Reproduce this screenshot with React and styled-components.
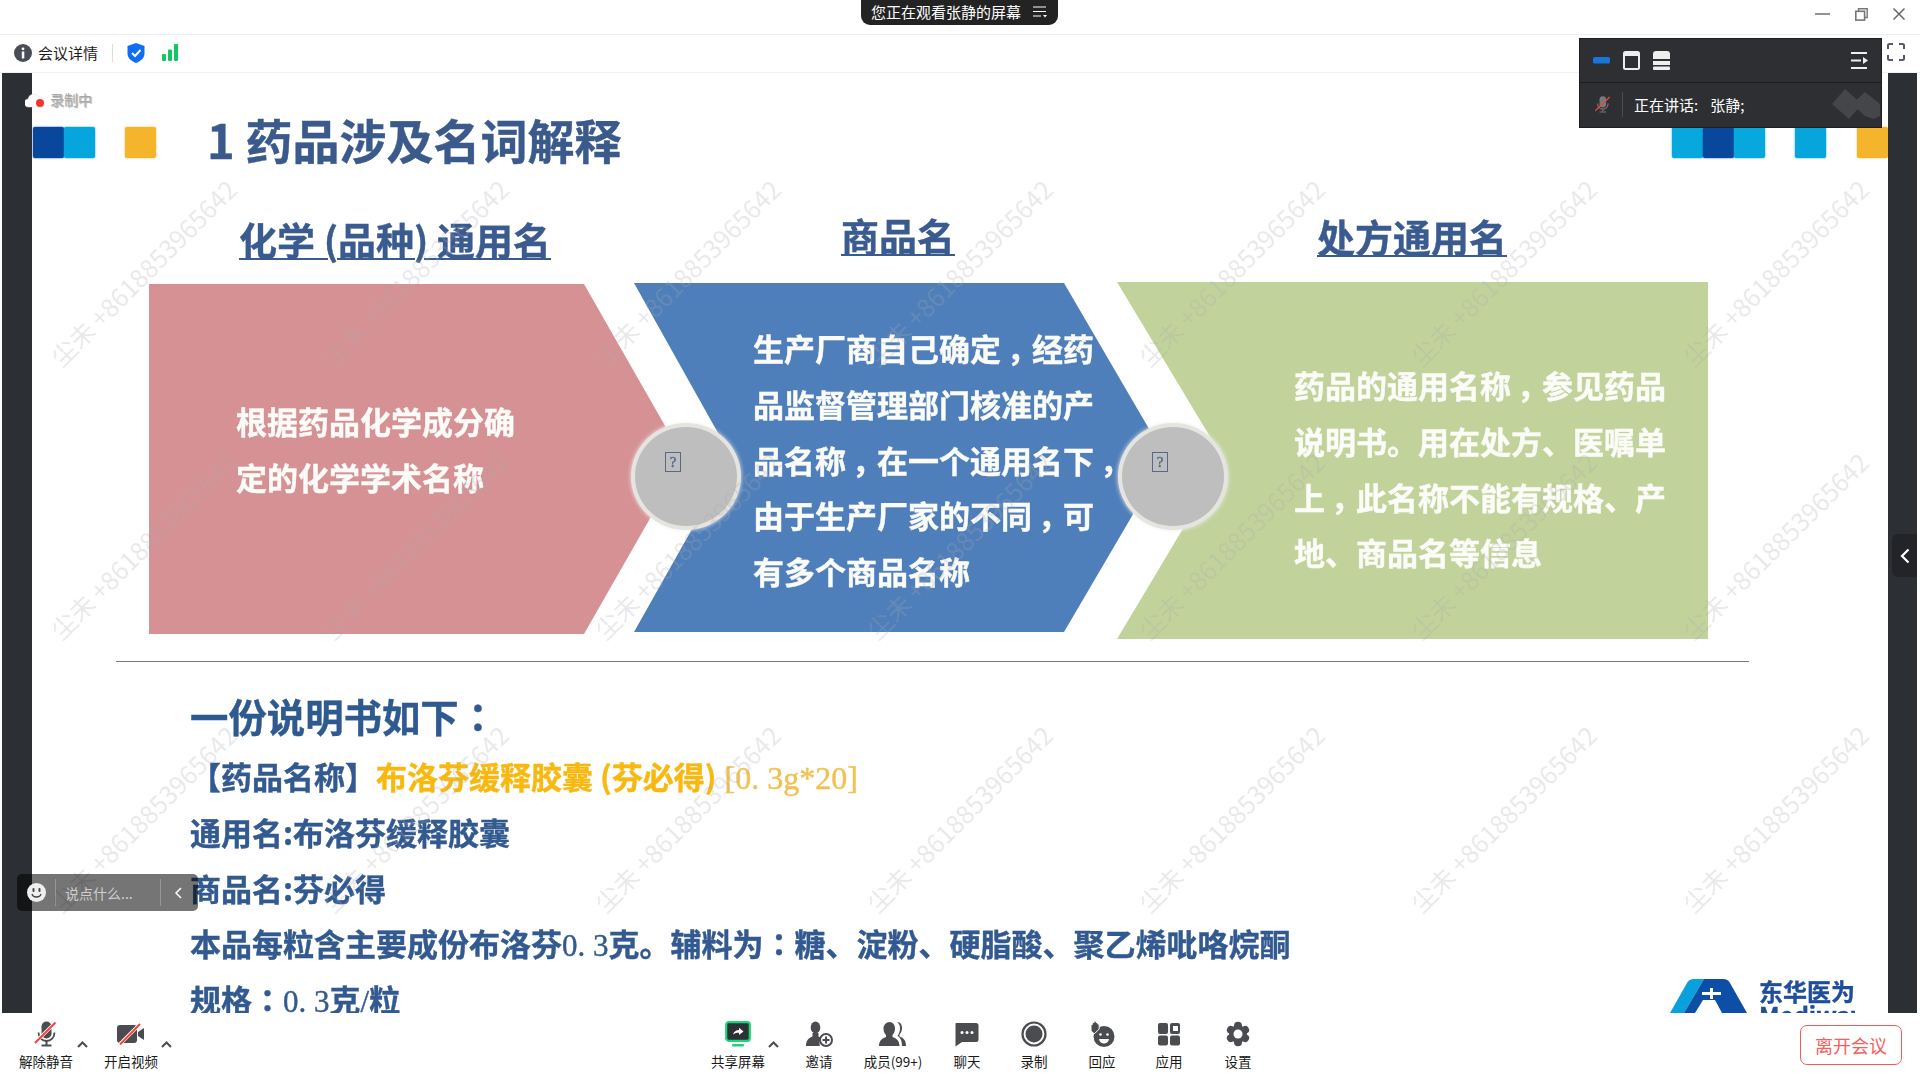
import React from "react";
import styled, { createGlobalStyle } from "styled-components";

const Global = createGlobalStyle`
  html, body { margin: 0; padding: 0; background: #fff; }
  * { box-sizing: border-box; }
`;

const UI = `"Noto Sans CJK SC", "Noto Sans", sans-serif`;
const SLIDE = `"Noto Sans CJK SC", "Noto Sans", sans-serif`;
const SERIF = `"Liberation Serif", "Noto Sans CJK SC", serif`;

const Page = styled.div`
  position: relative; width: 1920px; height: 1080px; overflow: hidden;
  display: flex; flex-direction: column; background: #fff; font-family: ${UI}; color: #1b1b1b;
`;
const TitleBar = styled.div`
  height: 35px; flex: none; border-bottom: 1px solid #eeeef8; display: flex; justify-content: flex-end;
  align-items: flex-start; padding: 8px 15px 0 0; gap: 25px;
`;
const Banner = styled.div`
  position: absolute; top: 0; left: 861px; width: 197px; height: 25px; background: #232323; border-radius: 0 0 9px 9px;
  display: flex; align-items: center; padding: 0 0 2px 10px; gap: 11px; color: #fff; font-size: 15px; line-height: 22px; white-space: nowrap;
`;
const InfoBar = styled.div`
  height: 38px; flex: none; border-bottom: 1px solid #f0f0fa; display: flex; align-items: center; padding: 0 0 2px 14px; position: relative;
`;
const InfoText = styled.span`
  font-size: 15px; margin-left: 6px; color: #1c1c1c; white-space: nowrap;
`;
const InfoSep = styled.i`
  width: 1px; height: 18px; background: #dcdcdc; margin: 0 14px;
`;
const FullBtn = styled.div`
  margin-left: auto; margin-right: 15px; display: flex; margin-top: -1px;
`;
const Stage = styled.div`
  position: relative; flex: none; height: 940px; display: flex; padding: 0 3px 0 2px; overflow: hidden;
`;
const SideBar = styled.div`
  flex: none; width: ${p => p.$w}px; background: #2c2f33;
`;
const Slide = styled.div`
  flex: none; width: 1856px; height: 940px; overflow: hidden; background: #fff; display: flex; flex-direction: column;
  font-family: ${SLIDE}; filter: blur(0.45px); -webkit-text-stroke: 0.4px currentColor;
`;
const SlideHead = styled.div`
  flex: none; height: 46px; margin-top: 46px; display: flex; align-items: center; padding-left: 1px;
`;
const SwatchSet = styled.div`
  display: flex; margin-left: ${p => p.$ml || 0}px; flex: none;
`;
const Swatch = styled.i`
  display: block; width: 31px; height: 31px; border-radius: 2px; background: ${p => p.$c};
  box-shadow: 0 0 2px ${p => p.$c};
`;
const Title = styled.h1`
  margin: -6px 0 0 51px; font-size: 47px; line-height: 46px; font-weight: 700; color: #3b5a8c; white-space: nowrap; width: 421px;
`;
const HeadRow = styled.div`
  flex: none; height: 117px; margin: 0 0 0 117px; display: grid; grid-template-columns: 492px 514px 514px; 
`;
const ColHead = styled.div`
  text-align: center; padding-top: ${p => p.$top}px; font-size: 38px; line-height: 42px; font-weight: 700; color: #3a5b8f;
  white-space: nowrap; text-decoration: underline; text-decoration-thickness: 2px; text-underline-offset: 3px;
`;
const ShapeRow = styled.div`
  position: relative; flex: none; height: 357px; margin-left: 117px; display: flex; align-items: flex-start;
`;
const Chevron = styled.div`
  flex: none; width: ${p => p.$w}px; height: ${p => p.$h}px; margin-top: ${p => p.$top}px; margin-left: ${p => p.$ml || 0}px;
  background: ${p => p.$bg}; clip-path: polygon(${p => p.$clip});
  display: flex; align-items: center; padding: ${p => p.$pt || 0}px 0 ${p => p.$pb || 0}px ${p => p.$pad}px;
  color: #fbfbf7; font-size: 31px; line-height: 55.8px; font-weight: 700; white-space: nowrap;
`;
const Orb = styled.div`
  position: absolute; top: 141px; left: ${p => p.$left}px; width: 110px; height: 107px; border-radius: 50%;
  background: #bebebe; border: 4px solid #e6e4df; box-shadow: 0 0 4px #eee; padding: 25px 0 0 30px;
`;
const Missing = styled.span`
  display: flex; align-items: center; justify-content: center; width: 16px; height: 20px;
  border: 1.5px solid #56688c; color: #56688c; font: 15px/1 ${SERIF};
`;
const Rule = styled.div`
  flex: none; height: 1px; margin: 22px 0 0 84px; width: 1633px; background: #7b7b7b;
`;
const Lower = styled.div`
  flex: 1; min-height: 0; margin-top: 25px; padding: 0 33px 0 158px; display: flex; justify-content: space-between; align-items: flex-end; overflow: hidden;
`;
const Lines = styled.div`
  align-self: flex-start; display: flex; flex-direction: column; height: 400px;
`;
const Big = styled.div`
  flex: none; font-size: 38.4px; line-height: 56px; font-weight: 700; color: #2f5a8f; margin-bottom: 5px; white-space: nowrap;
`;
const Line = styled.div`
  flex: none; height: 55.8px; font-size: 31px; line-height: 55.8px; font-weight: 700; color: #325a90; white-space: nowrap;
`;
const Accent = styled.span`
  color: ${p => p.$c || "#f8b80f"};
`;
const Num = styled.span`
  font-family: ${SERIF}; font-weight: 400; line-height: 1; font-size: ${p => p.$s || 31}px; color: ${p => p.$c || "inherit"};
`;
const Punct = styled.span`
  font-family: "Noto Sans CJK TC", sans-serif;
`;
const Comma = styled.span`
  display: inline-block; padding-left: 6px; margin-right: -6px;
`;
const Logo = styled.div`
  height: 34px; display: flex; gap: 8px; overflow: hidden; flex: none;
`;
const LogoText = styled.div`
  color: #1f4f9a; font-weight: 700; font-size: 24px; line-height: 24px; white-space: nowrap; font-family: ${UI};
  width: 96px; display: flex; flex-direction: column;
`;
const Mark = styled.div`
  position: absolute; inset: 0; padding: 63px 0 0 7px; display: grid; grid-template-columns: repeat(7, 272px);
  grid-auto-rows: 273px; pointer-events: none;
`;
const MarkCell = styled.div`
  display: flex; align-items: center; justify-content: center;
`;
const MarkText = styled.span`
  transform: rotate(-45deg); white-space: nowrap; font: 25px/1 ${UI}; color: rgba(170,170,175,.26);
`;
const RecBadge = styled.div`
  position: absolute; left: 25px; top: 16px; display: flex; align-items: center; gap: 5px; color: #a8a8a8; font-size: 14px;
  text-shadow: 0 0 2px #fff, 1px 1px 1px #888;
`;
const ChatBox = styled.div`
  position: absolute; left: 17px; top: 801px; width: 181px; height: 37px; border-radius: 5px; background: rgba(0,0,0,.54);
  display: flex; align-items: center; padding-left: 10px; color: #cfcfcf; font-size: 14px; white-space: nowrap;
`;
const ChatDiv = styled.i`
  width: 1px; height: 27px; background: rgba(255,255,255,.25); margin: ${p => p.$m};
`;
const ChatLabel = styled.span`
  width: 95px;
`;
const SideHandle = styled.div`
  position: absolute; left: 1892px; top: 461px; width: 25px; height: 43px; background: #222427; border-radius: 6px 0 0 6px;
  display: flex; align-items: center; justify-content: center;
`;
const Panel = styled.div`
  position: absolute; left: 1579px; top: 38px; width: 303px; height: 90px; background: #2d2f33; border: 1px solid #1d1e20;
  display: flex; flex-direction: column; color: #fff;
`;
const PanelTop = styled.div`
  height: 44px; flex: none; border-bottom: 1px solid #1c1d1f; display: flex; align-items: center; padding: 0 13px 1px; gap: 13px;
`;
const PanelBottom = styled.div`
  flex: 1; position: relative; display: flex; align-items: center; padding: 0 0 2px 14px; font-size: 15px; white-space: pre; overflow: hidden;
`;
const PanelDiv = styled.i`
  width: 1px; height: 25px; background: #4a4c50; margin: 0 11px 0 11px;
`;
const Speaker = styled.span`
  margin-left: 12px;
`;
const Ghost = styled.svg`
  position: absolute; right: 1px; top: 6px;
`;
const Push = styled.i`
  margin-left: auto;
`;
const Toolbar = styled.div`
  flex: 1; display: flex; align-items: flex-start; padding-left: 16px;
`;
const Tool = styled.div`
  flex: none; width: ${p => p.$w}px; margin-left: ${p => p.$ml || 0}px; padding-top: 8px; display: flex; flex-direction: column; align-items: center;
`;
const ToolIcon = styled.div`
  height: 26px; display: flex; align-items: center; justify-content: center;
`;
const ToolLabel = styled.span`
  margin-top: 6px; font-size: 13.5px; line-height: 16px; color: #1a1a1a; white-space: nowrap;
`;
const Caret = styled.svg`
  flex: none; margin: 28px 0 0 ${p => p.$ml || 0}px;
`;
const Leave = styled.button`
  margin: 12px 18px 0 auto; width: 102px; height: 40px; background: #fff; border: 1px solid #f45a55; border-radius: 7px;
  color: #f4605c; font: 18px/1 ${UI}; padding: 0;
`;

const ICON = "#4b4c50";
const Up = ({ ml }) => (
  <Caret $ml={ml} width="11" height="7" viewBox="0 0 11 7"><path d="M1 6 5.5 1.5 10 6" fill="none" stroke={ICON} strokeWidth="2" /></Caret>
);
const MicIcon = () => (
  <svg width="26" height="26" viewBox="0 0 26 26">
    <rect x="8.5" y="0.5" width="10" height="17" rx="5" fill={ICON} />
    <path d="M5.5 11.5c0 5 3.5 8.5 8 8.5s8-3.500 8-8.500" fill="none" stroke={ICON} strokeWidth="1.800" />
    <path d="M13.500 20v3.500M8.500 24.500h10" stroke={ICON} strokeWidth="2" />
    <path d="M2 21.500 22 2" stroke="#fff" strokeWidth="3.500" />
    <path d="M2 22 22.500 1.500" stroke="#f4433c" strokeWidth="2" />
  </svg>
);
const VideoIcon = () => (
  <svg width="28" height="22" viewBox="0 0 28 22">
    <rect x="0" y="2" width="20" height="18" rx="3" fill={ICON} />
    <path d="M21 9l6-4v12l-6-4z" fill={ICON} />
    <path d="M3 21 23 1" stroke="#fff" strokeWidth="3.500" />
    <path d="M3 21.500 23 1" stroke="#f4433c" strokeWidth="2" />
  </svg>
);
const ShareIcon = () => (
  <svg width="26" height="26" viewBox="0 0 26 26">
    <rect x="1.200" y="1.200" width="23.600" height="18.600" rx="2.500" fill="#2d3034" stroke="#1ad775" strokeWidth="2.200" />
    <path d="M8 13.500c1-3 3-4.500 6-4.500V6.800l4.500 3.700L14 14v-2.200c-2.500 0-4.200.4-6 1.700z" fill="#fff" />
    <rect x="7" y="23" width="12" height="2.500" rx="1" fill="#1ad775" />
  </svg>
);
const InviteIcon = () => (
  <svg width="28" height="26" viewBox="0 0 28 26">
    <ellipse cx="10.500" cy="6.500" rx="4.800" ry="6" fill={ICON} />
    <path d="M1 25c0-6 3-8 6.500-9.500V12h6v3.500c1 .4 2 .9 2.800 1.500a8 8 0 0 0-1.300 8z" fill={ICON} />
    <circle cx="21" cy="19" r="6" fill="#fff" stroke={ICON} strokeWidth="2" />
    <path d="M21 15.500v7M17.500 19h7" stroke={ICON} strokeWidth="2" />
  </svg>
);
const MembersIcon = () => (
  <svg width="30" height="26" viewBox="0 0 30 26">
    <path d="M19 1c3.500 0 5 2.800 5 6 0 3-1 5-2.500 6.500v2c3 1.200 6.500 3 6.500 9.500h-4c0-6-2-8.500-4.500-10 1.500-2 2.500-4.500 2.500-8 0-2.500-.8-4.500-3-6z" fill={ICON} />
    <path d="M11.500 1c3.500 0 5.500 3 5.500 6.500 0 3-1 5-2.500 6.500v2c3 1.200 7 3 7 9H1c0-6 4-7.800 7-9v-2C6.500 12.500 5.500 10.500 5.500 7.500 5.500 4 8 1 11.500 1z" fill={ICON} />
  </svg>
);
const ChatIcon = () => (
  <svg width="24" height="26" viewBox="0 0 24 26">
    <path d="M3 2h18a2.500 2.500 0 0 1 2.500 2.500v14A2.500 2.500 0 0 1 21 21H7l-6.500 4.500v-23C.5 2 2 2 3 2z" fill={ICON} />
    <circle cx="7" cy="11.500" r="1.500" fill="#fff" /><circle cx="12" cy="11.500" r="1.500" fill="#fff" /><circle cx="17" cy="11.500" r="1.500" fill="#fff" />
  </svg>
);
const RecordIcon = () => (
  <svg width="26" height="26" viewBox="0 0 26 26">
    <circle cx="13" cy="13" r="11.500" fill="none" stroke={ICON} strokeWidth="2.200" />
    <circle cx="13" cy="13" r="8.500" fill={ICON} />
  </svg>
);
const ReactIcon = () => (
  <svg width="28" height="28" viewBox="0 0 28 28">
    <circle cx="16" cy="16.500" r="10.500" fill={ICON} />
    <circle cx="12.500" cy="14.500" r="1.300" fill="#fff" /><circle cx="19.500" cy="14.500" r="1.300" fill="#fff" />
    <path d="M11 19h10c-.5 3-2.500 4.500-5 4.500S11.500 22 11 19z" fill="#fff" />
    <path d="M3 11V4.500h1.300V2.500h1.800V1h2v1.500h1.600V4h1.500v5l-2 2-2.500 2.500H6z" fill={ICON} stroke="#fff" strokeWidth="1" />
  </svg>
);
const AppsIcon = () => (
  <svg width="24" height="26" viewBox="0 0 24 26">
    <rect x="1" y="2" width="10" height="11" rx="2" fill={ICON} />
    <rect x="13" y="2" width="10" height="11" rx="2" fill={ICON} />
    <rect x="16" y="5" width="5" height="5" fill="#fff" />
    <rect x="1" y="14.500" width="10" height="10" rx="2" fill={ICON} />
    <rect x="13" y="14.500" width="10" height="10" rx="2" fill={ICON} />
  </svg>
);
const GearIcon = () => (
  <svg width="26" height="26" viewBox="0 0 26 26">
    {[0, 60, 120, 180, 240, 300].map(a => (
      <circle key={a} cx="13" cy="4.800" r="4" fill={ICON} transform={`rotate(${a} 13 13)`} />
    ))}
    <circle cx="13" cy="13" r="9" fill={ICON} />
    <circle cx="13" cy="13" r="4.500" fill="#fff" />
  </svg>
);

const marks = Array.from({ length: 21 });

export default function App() {
  return (
    <Page>
      <Global />
      <TitleBar>
        <svg width="15" height="12" viewBox="0 0 15 12"><path d="M0 6h15" stroke="#777" strokeWidth="1.600" /></svg>
        <svg width="13" height="13" viewBox="0 0 13 13"><path d="M3.500 3V.8h8.700v8.700H10" fill="none" stroke="#777" strokeWidth="1.400" /><rect x=".8" y="3.300" width="8.800" height="8.800" fill="none" stroke="#777" strokeWidth="1.600" /></svg>
        <svg width="12" height="12" viewBox="0 0 12 12"><path d="M.5.500l11 11M11.500.500l-11 11" stroke="#666" strokeWidth="1.500" /></svg>
      </TitleBar>
      <InfoBar>
        <svg width="18" height="18" viewBox="0 0 18 18"><circle cx="9" cy="9" r="9" fill="#4a4d55" /><circle cx="9" cy="4.800" r="1.400" fill="#fff" /><rect x="7.800" y="7.500" width="2.500" height="7" fill="#fff" /></svg>
        <InfoText>会议详情</InfoText>
        <InfoSep />
        <svg width="18" height="20" viewBox="0 0 18 20"><path d="M9 0l8.500 3v7.500C17.500 15 14 18 9 20 4 18 .5 15 .5 10.500V3z" fill="#0e6cf5" /><path d="M5 10l3 3 5.500-6" fill="none" stroke="#fff" strokeWidth="2" /></svg>
        <svg style={{ marginLeft: 17 }} width="16" height="17" viewBox="0 0 16 17"><rect x="0" y="10" width="4" height="7" rx="1" fill="#0ec864" /><rect x="6" y="5.500" width="4" height="11.500" rx="1" fill="#0ec864" /><rect x="12" y="0" width="4" height="17" rx="1" fill="#0ec864" /></svg>
        <FullBtn>
          <svg width="18" height="18" viewBox="0 0 18 18"><path d="M1 6V2.500A1.500 1.500 0 0 1 2.500 1H6M12 1h3.500A1.500 1.500 0 0 1 17 2.500V6M17 12v3.500a1.500 1.500 0 0 1-1.500 1.500H12M6 17H2.500A1.500 1.500 0 0 1 1 15.500V12" fill="none" stroke="#555a66" strokeWidth="2" /></svg>
        </FullBtn>
      </InfoBar>
      <Stage>
        <SideBar $w={30} />
        <Slide>
          <SlideHead>
            <SwatchSet>
              <Swatch $c="#08479b" /><Swatch $c="#06a5de" />
            </SwatchSet>
            <SwatchSet $ml={30}><Swatch $c="#f4b52d" /></SwatchSet>
            <Title>1 药品涉及名词解释</Title>
            <SwatchSet $ml={1045}>
              <Swatch $c="#06a8de" /><Swatch $c="#08479b" /><Swatch $c="#06a8de" />
            </SwatchSet>
            <SwatchSet $ml={30}><Swatch $c="#06a5dc" /></SwatchSet>
            <SwatchSet $ml={31}><Swatch $c="#f4b52d" /></SwatchSet>
          </SlideHead>
          <HeadRow>
            <ColHead $top={53}>化学 (品种) 通用名</ColHead>
            <ColHead $top={49}>商品名</ColHead>
            <ColHead $top={50}>处方通用名</ColHead>
          </HeadRow>
          <ShapeRow>
            <Chevron $w={535} $h={350} $top={2} $bg="#d59194" $pad={87} $pb={20} $clip="0 0, 435px 0, 535px 175px, 435px 350px, 0 350px">
              <div>根据药品化学成分确<br />定的化学学术名称</div>
            </Chevron>
            <Chevron $w={532} $h={349} $top={1} $ml={-50} $bg="#4f7fba" $pad={119} $pt={4} $clip="0 0, 430px 0, 532px 175px, 430px 349px, 0 349px, 98px 175px">
              <div>生产厂商自己确定<Comma>，</Comma>经药<br />品监督管理部门核准的产<br />品名称<Comma>，</Comma>在一个通用名下<Comma>，</Comma><br />由于生产厂家的不同<Comma>，</Comma>可<br />有多个商品名称</div>
            </Chevron>
            <Chevron $w={591} $h={357} $top={0} $ml={-49} $bg="#c1d39b" $pad={177} $pt={16} $clip="0 0, 591px 0, 591px 357px, 0 357px, 107px 178px">
              <div>药品的通用名称<Comma>，</Comma>参见药品<br />说明书。用在处方、医嘱单<br />上<Comma>，</Comma>此名称不能有规格、产<br />地、商品名等信息</div>
            </Chevron>
            <Orb $left={482}><Missing>?</Missing></Orb>
            <Orb $left={969}><Missing>?</Missing></Orb>
          </ShapeRow>
          <Rule />
          <Lower>
            <Lines>
              <Big>一份说明书如下<Punct>：</Punct></Big>
              <Line>【药品名称】<Accent>布洛芬缓释胶囊 (芬必得)</Accent><Num $c="#f3c04f" $s={32}> [0. 3g*20]</Num></Line>
              <Line>通用名:布洛芬缓释胶囊</Line>
              <Line>商品名:芬必得</Line>
              <Line>本品每粒含主要成份布洛芬<Num>0. 3</Num>克。辅料为<Punct>：</Punct>糖、淀粉、硬脂酸、聚乙烯吡咯烷酮</Line>
              <Line>规格<Punct>：</Punct><Num>0. 3</Num>克<Num>/</Num>粒</Line>
            </Lines>
            <Logo>
              <svg width="81" height="34" viewBox="0 0 81 34">
                <path d="M0 34 17 4Q19 0 24 0H34L14 34z" fill="#0aa0dc" />
                <path d="M34 0h19q5 0 7 4l17 30H52L45 21H33L25 34H14z" fill="#0d4ea6" />
                <path d="M40 9h3v4h8v3h-8v4h-3v-4h-8v-3h8z" fill="#fff" />
              </svg>
              <LogoText><span>东华医为</span><span>Mediway</span></LogoText>
            </Logo>
          </Lower>
        </Slide>
        <SideBar $w={29} />
        <Mark>
          {marks.map((_, i) => <MarkCell key={i}><MarkText>尘未 +8618853965642</MarkText></MarkCell>)}
        </Mark>
        <RecBadge>
          <svg width="20" height="17" viewBox="0 0 20 17"><path d="M4 16a4 4 0 0 1-1-8 6 6 0 0 1 11-2 5 5 0 0 1 2 10z" fill="#fff" stroke="#ddd" strokeWidth=".5" /><circle cx="15" cy="12" r="4" fill="#f5352d" /></svg>
          <span>录制中</span>
        </RecBadge>
        <ChatBox>
          <svg width="19" height="19" viewBox="0 0 19 19"><circle cx="9.500" cy="9.500" r="9.500" fill="#efefef" /><rect x="5.500" y="5" width="2" height="4" rx="1" fill="#444" /><rect x="11.500" y="5" width="2" height="4" rx="1" fill="#444" /><path d="M5 11c1 4 8 4 9 0" fill="none" stroke="#444" strokeWidth="1.300" /></svg>
          <ChatDiv $m="0 9px 0 9px" />
          <ChatLabel>说点什么...</ChatLabel>
          <ChatDiv $m="0 14px 0 0" />
          <svg width="7" height="12" viewBox="0 0 7 12"><path d="M6 1 1 6l5 5" fill="none" stroke="#fff" strokeWidth="1.500" /></svg>
        </ChatBox>
        <SideHandle>
          <svg width="10" height="16" viewBox="0 0 10 16"><path d="M8.500 1.500 2 8l6.500 6.500" fill="none" stroke="#fff" strokeWidth="2.200" /></svg>
        </SideHandle>
      </Stage>
      <Toolbar>
        <Tool $w={60}><ToolIcon><MicIcon /></ToolIcon><ToolLabel>解除静音</ToolLabel></Tool>
        <Up ml={1} />
        <Tool $w={60} $ml={13}><ToolIcon><VideoIcon /></ToolIcon><ToolLabel>开启视频</ToolLabel></Tool>
        <Up />
        <Tool $w={60} $ml={536}><ToolIcon><ShareIcon /></ToolIcon><ToolLabel>共享屏幕</ToolLabel></Tool>
        <Up />
        <Tool $w={68} $ml={6}><ToolIcon><InviteIcon /></ToolIcon><ToolLabel>邀请</ToolLabel></Tool>
        <Tool $w={80}><ToolIcon><MembersIcon /></ToolIcon><ToolLabel>成员(99+)</ToolLabel></Tool>
        <Tool $w={68}><ToolIcon><ChatIcon /></ToolIcon><ToolLabel>聊天</ToolLabel></Tool>
        <Tool $w={66}><ToolIcon><RecordIcon /></ToolIcon><ToolLabel>录制</ToolLabel></Tool>
        <Tool $w={70}><ToolIcon><ReactIcon /></ToolIcon><ToolLabel>回应</ToolLabel></Tool>
        <Tool $w={64}><ToolIcon><AppsIcon /></ToolIcon><ToolLabel>应用</ToolLabel></Tool>
        <Tool $w={74}><ToolIcon><GearIcon /></ToolIcon><ToolLabel>设置</ToolLabel></Tool>
        <Leave>离开会议</Leave>
      </Toolbar>
      <Banner>
        <span>您正在观看张静的屏幕</span>
        <svg width="15" height="13" viewBox="0 0 15 13"><path d="M1 2h13M1 6.500h13M1 11h8" stroke="#fff" strokeWidth="1.200" /><path d="M11 10h4l-2 2.500z" fill="#fff" /></svg>
      </Banner>
      <Panel>
        <PanelTop>
          <svg width="17" height="7" viewBox="0 0 17 7"><rect width="17" height="6.500" rx="1.500" fill="#1b74d8" /></svg>
          <svg width="17" height="19" viewBox="0 0 17 19"><rect x="0" y="0" width="17" height="19" rx="2.500" fill="#eee" /><rect x="2" y="5" width="13" height="12" fill="#2d2f33" /></svg>
          <svg width="17" height="19" viewBox="0 0 17 19"><path d="M0 8V3a3 3 0 0 1 3-3h11a3 3 0 0 1 3 3v5z" fill="#eee" /><rect y="10" width="17" height="4" fill="#eee" /><rect y="15.500" width="17" height="3.500" rx="1" fill="#eee" /></svg>
          <Push />
          <svg width="18" height="19" viewBox="0 0 18 19"><path d="M1 2h16M1 9.500h10M1 17h16" stroke="#eee" strokeWidth="2.200" /><path d="M13 6l5 3.500L13 13z" fill="#eee" /></svg>
        </PanelTop>
        <PanelBottom>
          <svg width="17" height="19" viewBox="0 0 26 26"><rect x="8.500" y=".5" width="10" height="17" rx="5" fill="#77797d" /><path d="M5.500 11.500c0 5 3.500 8.500 8 8.500s8-3.500 8-8.500M13.500 20v3.500M8.500 24.500h10" fill="none" stroke="#77797d" strokeWidth="1.800" /><path d="M2 22.500 24 1.500" stroke="#f4433c" strokeWidth="2" /></svg>
          <PanelDiv />
          <span>正在讲话:</span>
          <Speaker>张静;</Speaker>
          <Ghost width="48" height="30" viewBox="0 0 48 30"><path d="M0 15 13 0 30 15 17 30zM20 15 33 3l15 12v12l-6 3-9-3z" fill="#44464a" /></Ghost>
        </PanelBottom>
      </Panel>
    </Page>
  );
}
